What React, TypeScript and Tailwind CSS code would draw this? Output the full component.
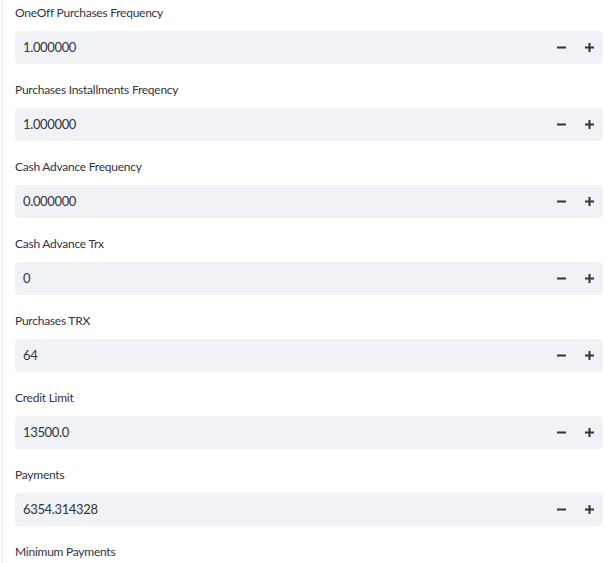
const fields = [
  { label: "OneOff Purchases Frequency", value: "1.000000" },
  { label: "Purchases Installments Freqency", value: "1.000000" },
  { label: "Cash Advance Frequency", value: "0.000000" },
  { label: "Cash Advance Trx", value: "0" },
  { label: "Purchases TRX", value: "64" },
  { label: "Credit Limit", value: "13500.0" },
  { label: "Payments", value: "6354.314328" },
  { label: "Minimum Payments", value: "" },
];

const Minus = () => (
  <svg width="11" height="11" viewBox="0 0 11 11">
    <path d="M1 5.5h9" stroke="#31333f" strokeWidth="2" />
  </svg>
);

const Plus = () => (
  <svg width="11" height="11" viewBox="0 0 11 11">
    <path d="M1 5.5h9M5.5 1v9" stroke="#31333f" strokeWidth="2" />
  </svg>
);

const NumberInput = ({ label, value }: { label: string; value: string }) => (
  <div className="pt-[4px] pb-[13px]">
    <div className="h-[18px] leading-[18px] text-[12px] tracking-[-0.25px] text-[#31333f] mb-[9px]">
      {label}
    </div>
    {value !== "" && (
      <div className="h-[33px] bg-[#f0f2f6] rounded-[4px] flex items-center">
        <span className="flex-1 pl-[8px] pt-[1px] text-[13px] tracking-[-0.35px] text-[#31333f]">
          {value}
        </span>
        <button className="w-[28px] h-full flex items-center justify-center">
          <Minus />
        </button>
        <button className="w-[28px] h-full flex items-center justify-center">
          <Plus />
        </button>
      </div>
    )}
  </div>
);

export default function App() {
  return (
    <div className="w-[607px] h-[563px] overflow-hidden bg-white font-['Lato','Noto_Sans',sans-serif]">
      <div className="ml-[2px] h-full border-l border-[#eeeeee] pl-[12px] pr-[4px]">
        {fields.map((f) => (
          <NumberInput key={f.label} label={f.label} value={f.value} />
        ))}
      </div>
    </div>
  );
}
